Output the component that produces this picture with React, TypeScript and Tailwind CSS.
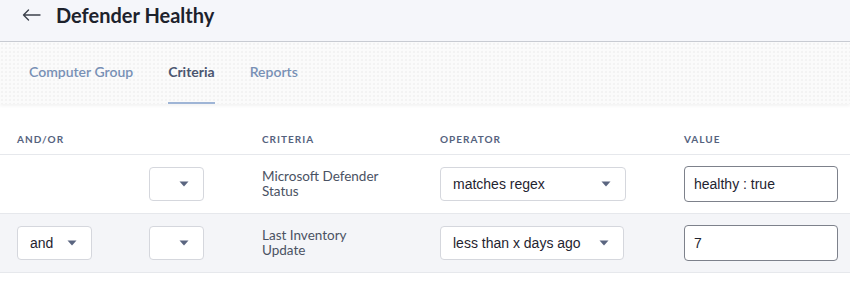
import React from "react";

function Caret() {
    return (
        <svg width="10" height="6" viewBox="0 0 10 6" className="shrink-0">
            <path d="M0.5 0.5 L9.5 0.5 L5 5.5 Z" fill="#5a6580" />
        </svg>
    );
}

function BackArrow() {
    return (
        <svg width="19" height="12" viewBox="0 0 19 12" className="shrink-0">
            <path d="M18 6 H1.5 M6.5 1 L1.5 6 L6.5 11" fill="none" stroke="#3d424c" strokeWidth="1.4" strokeLinecap="round" strokeLinejoin="round" />
        </svg>
    );
}

function FakeSelect({ value, width }: { value?: string; width: string }) {
    return (
        <div
            className={`${width} h-[34px] flex items-center justify-between pl-[12px] pr-[14px] bg-white border border-[#d5d7dd] rounded-[4px] text-[14px] text-[#1f2430] font-['Liberation_Sans',sans-serif]`}
        >
            <span>{value}</span>
            <Caret />
        </div>
    );
}

function ValueInput({ value }: { value: string }) {
    return (
        <div className="w-[154px] h-[36px] flex items-center px-[9px] bg-white border border-[#7d818b] rounded-[4px] text-[14px] text-[#1f2430] font-['Liberation_Sans',sans-serif]">
            {value}
        </div>
    );
}

const rows = [
    { andOr: null, criteria: ["Microsoft Defender", "Status"], operator: "matches regex", opWidth: "w-[186px]", value: "healthy : true", bg: "bg-white" },
    { andOr: "and", criteria: ["Last Inventory", "Update"], operator: "less than x days ago", opWidth: "w-[184px]", value: "7", bg: "bg-[#f4f5f8]" },
];

export default function App() {
    return (
        <div className="w-[850px] h-[281px] bg-white overflow-hidden font-['Lato',sans-serif]">
            <div className="h-[42px] bg-[#f5f6fa] border-b border-[#c8cbd2] flex items-center pb-[12px]">
                <span className="ml-[22px]"><BackArrow /></span>
                <h1 className="ml-[15px] text-[20px] leading-[26px] font-bold text-[#1d222c]">Defender Healthy</h1>
            </div>
            <div className="h-[62px] bg-[#fbfbfb] bg-[radial-gradient(circle,#f3f3f3_1px,transparent_1.6px)] bg-[length:4px_4px] flex items-end pl-[29px] gap-[35px] shadow-[0_2px_3px_rgba(0,0,0,0.05)] relative">
                <div className="pb-[22px] text-[14px] font-semibold text-[#7890b5]">Computer Group</div>
                <div className="pb-[20px] text-[14px] font-bold text-[#4b5670] border-b-[2px] border-[#9fb5d6]">Criteria</div>
                <div className="pb-[22px] text-[14px] font-semibold text-[#7890b5]">Reports</div>
            </div>
            <div className="grid grid-cols-[132px_113px_178px_244px_1fr] pl-[17px] h-[51px] items-end pb-[7px] border-b border-[#e6e8ec] text-[10px] font-bold tracking-[0.1em] text-[#55627e]">
                <div>AND/OR</div>
                <div></div>
                <div>CRITERIA</div>
                <div>OPERATOR</div>
                <div>VALUE</div>
            </div>
            {rows.map((row, i) => (
                <div
                    key={i}
                    className={`grid grid-cols-[132px_113px_178px_244px_1fr] pl-[17px] h-[59px] items-center border-b border-[#e6e8ec] ${row.bg}`}
                >
                    <div>{row.andOr && <FakeSelect value={row.andOr} width="w-[75px]" />}</div>
                    <div><FakeSelect width="w-[55px]" /></div>
                    <div className="text-[13.5px] leading-[15px] text-[#4a5263]">
                        <div>{row.criteria[0]}</div>
                        <div>{row.criteria[1]}</div>
                    </div>
                    <div><FakeSelect value={row.operator} width={row.opWidth} /></div>
                    <div><ValueInput value={row.value} /></div>
                </div>
            ))}
        </div>
    );
}
